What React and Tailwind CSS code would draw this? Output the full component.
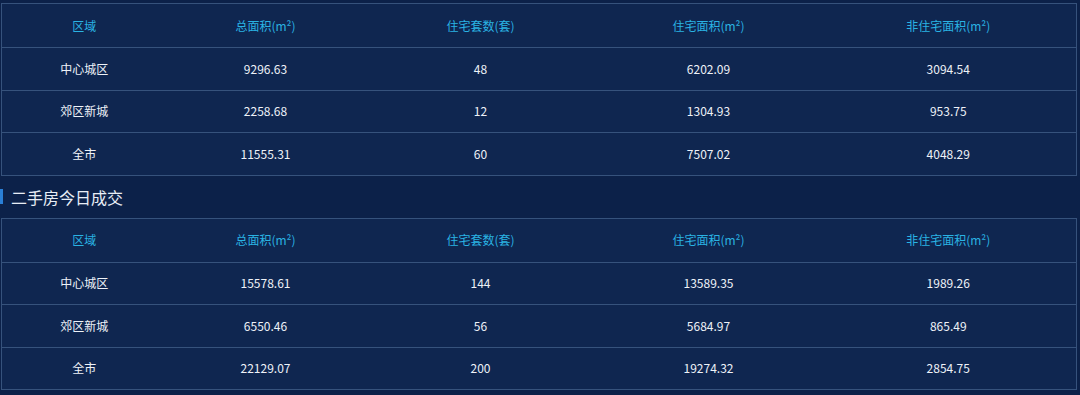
const headers = ['区域', '总面积(m²)', '住宅套数(套)', '住宅面积(m²)', '非住宅面积(m²)']
const widths = ['w-[165px]', 'w-[198px]', 'w-[232px]', 'w-[224px]', '']

const newHouse = [
    ['中心城区', '9296.63', '48', '6202.09', '3094.54'],
    ['郊区新城', '2258.68', '12', '1304.93', '953.75'],
    ['全市', '11555.31', '60', '7507.02', '4048.29'],
]

const secondHand = [
    ['中心城区', '15578.61', '144', '13589.35', '1989.26'],
    ['郊区新城', '6550.46', '56', '5684.97', '865.49'],
    ['全市', '22129.07', '200', '19274.32', '2854.75'],
]

function DealTable({ rows }) {
    return (
        <table className="w-[1076px] ml-px table-fixed border-collapse bg-[#0f2650] text-[12px]">
            <thead>
                <tr className="h-[44px]">
                    {headers.map((h, i) => (
                        <th key={h} className={`${widths[i]} border-y border-[#36527c] first:border-l last:border-r font-normal text-[#2ab3e3]`}>
                            {h}
                        </th>
                    ))}
                </tr>
            </thead>
            <tbody>
                {rows.map((r) => (
                    <tr key={r[0]} className="h-[42.5px]">
                        {r.map((c, i) => (
                            <td key={i} className="border-y border-[#36527c] first:border-l last:border-r text-center text-[#eef2f8]">
                                {c}
                            </td>
                        ))}
                    </tr>
                ))}
            </tbody>
        </table>
    )
}

export default function App() {
    return (
        <div className="w-[1080px] h-[395px] bg-[#0c2149] pt-[3px] font-['Microsoft_YaHei','Noto_Sans_CJK_SC',sans-serif] overflow-hidden">
            <DealTable rows={newHouse} />
            <div className="flex items-center h-[42px]">
                <div className="w-[3px] h-[15px] bg-[#2a7fd6]" />
                <span className="ml-[8px] text-[16px] text-[#e8edf5]">二手房今日成交</span>
            </div>
            <DealTable rows={secondHand} />
        </div>
    )
}
